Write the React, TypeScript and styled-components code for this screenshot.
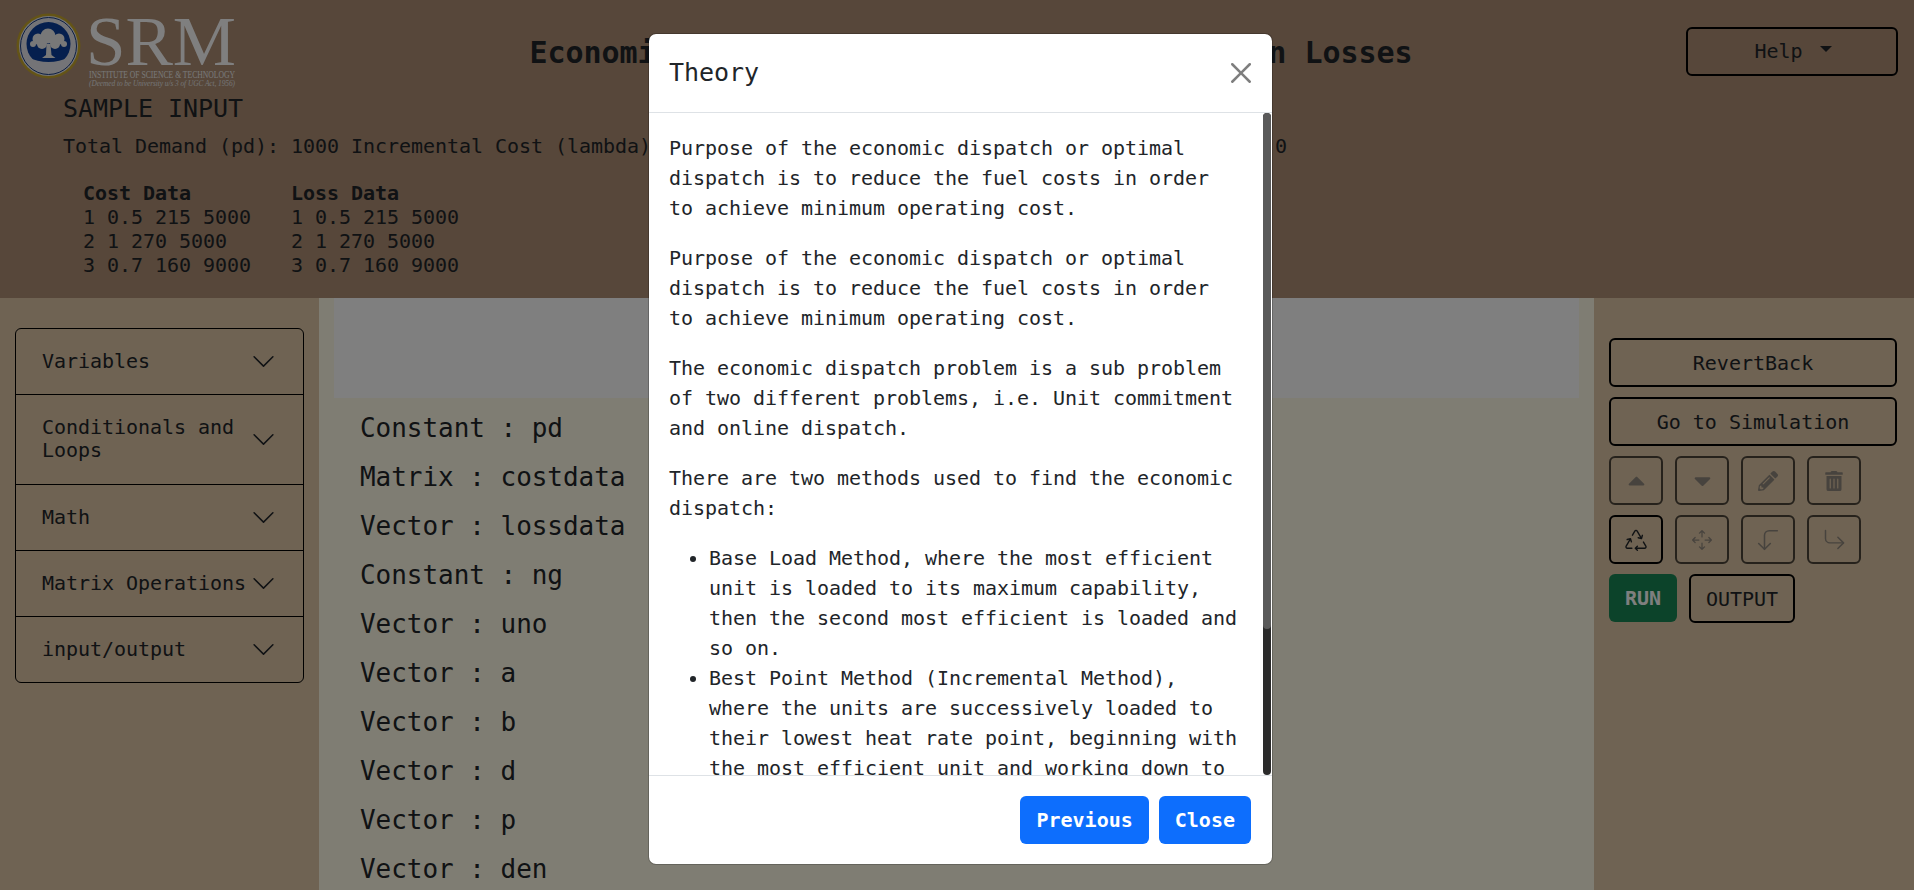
import React from "react";
import styled, { createGlobalStyle } from "styled-components";
import { FaCaretUp, FaCaretDown, FaPencilAlt, FaTrashAlt } from "react-icons/fa";
import { BsChevronDown, BsRecycle, BsArrowsMove } from "react-icons/bs";
import { CornerLeftDown, CornerDownRight } from "lucide-react";

const Global = createGlobalStyle`
  * { box-sizing: border-box; }
  html, body { margin: 0; height: 100%; overflow: hidden; }
  body {
    font-family: "DejaVu Sans Mono", "Liberation Mono", monospace;
    font-size: 20px;
    letter-spacing: -0.002em;
    line-height: 1.5;
    color: #212529;
    background: #fff;
  }
`;

const Page = styled.div`
  position: relative;
  height: 890px;
  display: flex;
  flex-direction: column;
  overflow: hidden;
`;

const Header = styled.header`
  height: 298px;
  flex: none;
  background: #ae8e74;
`;

const TopRow = styled.div`
  display: grid;
  grid-template-columns: 260px 1fr 228px;
  align-items: start;
  height: 88px;
`;

const LogoSvg = styled.svg`
  display: block;
  width: 260px;
  height: 88px;
`;

const Title = styled.h1`
  margin: 35px 0 0;
  font-size: 30px;
  font-weight: 700;
  line-height: 36px;
  text-align: center;
  white-space: nowrap;
  padding-right: 4px;
`;

const HelpButton = styled.button`
  width: 212px;
  height: 49px;
  margin-top: 27px;
  display: flex;
  align-items: center;
  justify-content: center;
  gap: 17px;
  padding: 0 0 2px 2px;
  background: transparent;
  border: 2px solid #000;
  border-radius: 6px;
  font: inherit;
  color: #212529;
`;

const Caret = styled.span`
  width: 0;
  height: 0;
  border-left: 6px solid transparent;
  border-right: 6px solid transparent;
  border-top: 6px solid #212529;
  margin-bottom: 3px;
`;

const Sample = styled.section`
  padding: 0 0 0 63px;
`;

const SampleTitle = styled.h5`
  margin: 6px 0 0;
  font-size: 25px;
  font-weight: 400;
  line-height: 30px;
`;

const SampleLine = styled.p`
  margin: 7px 0 0;
  white-space: nowrap;
`;

const DataTables = styled.div`
  display: flex;
  gap: 40px;
  margin: 20px 0 0 20px;
`;

const DataColumn = styled.div`
  width: 168px;
  line-height: 24px;
  white-space: pre;
`;

const DataHead = styled.div`
  font-weight: 700;
`;

const Main = styled.main`
  flex: 1;
  display: grid;
  grid-template-columns: 319px 1fr 320px;
  min-height: 0;
`;

const LeftPanel = styled.aside`
  background: #dec6a6;
  padding: 30px 15px 0 15px;
`;

const Accordion = styled.div`
  border: 1px solid #000;
  border-radius: 6px;
  overflow: hidden;
`;

const AccordionItem = styled.div`
  display: flex;
  align-items: center;
  justify-content: space-between;
  padding: 21px 27px 21px 26px;
  line-height: 23.2px;
  & + & {
    border-top: 1px solid #000;
  }
`;

const AccordionLabel = styled.span`
  flex: 1;
  min-width: 0;
`;

const Chevron = styled(BsChevronDown)`
  flex: none;
  width: 25px;
  height: 25px;
  margin: -4px 0;
`;

const Center = styled.div`
  background: #fffae6;
  padding: 0 15px;
  overflow: hidden;
`;

const Canvas = styled.div`
  height: 100px;
  background: #fff;
`;

const VarList = styled.ul`
  list-style: none;
  margin: 6px 0 0;
  padding: 0 0 0 26px;
`;

const VarRow = styled.li`
  height: 49px;
  font-size: 26px;
  line-height: 49px;
`;

const RightPanel = styled.aside`
  background: #dec6a6;
  padding: 40px 17px 0 15px;
  display: flex;
  flex-direction: column;
  gap: 10px;
`;

const OutlineButton = styled.button`
  height: 49px;
  padding: 0 15px;
  background: transparent;
  border: 2px solid #000;
  border-radius: 6px;
  font: inherit;
  color: #212529;
`;

const ToolGrid = styled.div`
  display: grid;
  grid-template-columns: repeat(4, 54px);
  gap: 10px 12px;
`;

const IconButton = styled.button<{ $disabled?: boolean }>`
  height: 49px;
  padding: 0;
  display: flex;
  align-items: center;
  justify-content: center;
  background: transparent;
  border: 2px solid #000;
  border-radius: 6px;
  color: ${(p) => (p.$disabled ? "#666666" : "#212529")};
  opacity: ${(p) => (p.$disabled ? 0.65 : 1)};
`;

const RunRow = styled.div`
  display: flex;
  gap: 12px;
`;

const RunButton = styled.button`
  width: 68px;
  height: 48px;
  padding: 0;
  background: #198754;
  border: 0;
  border-radius: 6px;
  font: inherit;
  font-weight: 600;
  color: #fff;
`;

const OutputButton = styled(OutlineButton)`
  width: 106px;
  padding: 0;
`;

const Backdrop = styled.div`
  position: absolute;
  inset: 0;
  background: rgba(0, 0, 0, 0.5);
`;

const Modal = styled.div`
  position: absolute;
  left: 648px;
  top: 33px;
  width: 625px;
  height: 832px;
  display: flex;
  flex-direction: column;
  background: #fff;
  background-clip: padding-box;
  border: 1px solid rgba(0, 0, 0, 0.2);
  border-radius: 8px;
  overflow: hidden;
`;

const ModalHead = styled.div`
  height: 79px;
  flex: none;
  display: flex;
  align-items: center;
  justify-content: space-between;
  padding: 0 21px 0 20px;
  border-bottom: 1px solid #dee2e6;
`;

const ModalTitle = styled.h5`
  margin: 0;
  font-size: 25px;
  font-weight: 400;
  line-height: 30px;
`;

const CloseX = styled.button`
  padding: 0;
  display: flex;
  background: none;
  border: 0;
  color: #000;
  opacity: 0.5;
`;

const ScrollArea = styled.div`
  position: relative;
  flex: 1;
  min-height: 0;
`;

const ModalBody = styled.div`
  height: 100%;
  overflow: hidden;
  padding: 20px 29px 20px 20px;
`;

const ScrollTrack = styled.div`
  position: absolute;
  top: 0;
  right: 1px;
  bottom: 0;
  width: 8px;
  background: #2b2b2b;
  border-radius: 4px;
`;

const ScrollThumb = styled.div`
  height: 516px;
  background: #5a5a5a;
  border-radius: 4px;
`;

const Para = styled.p`
  margin: 0 0 20px;
`;

const Bullets = styled.ul`
  margin: 0 0 20px;
  padding-left: 40px;
`;

const ModalFoot = styled.div`
  height: 89px;
  flex: none;
  display: flex;
  justify-content: flex-end;
  align-items: center;
  gap: 10px;
  padding: 0 21px 0 0;
  border-top: 1px solid #dee2e6;
`;

const PrimaryButton = styled.button`
  height: 48px;
  padding: 0 16px;
  background: #0d6efd;
  border: 0;
  border-radius: 6px;
  font: inherit;
  font-weight: 600;
  color: #fff;
`;

const Logo = () => (
  <LogoSvg viewBox="0 0 260 88" role="img" aria-label="SRM logo">
    <ellipse cx="48.5" cy="46" rx="32" ry="32.5" fill="#c9a92c" />
    <ellipse cx="48.5" cy="46" rx="29.5" ry="30" fill="#e8e8ee" />
    <ellipse cx="48.5" cy="46" rx="28" ry="28.5" fill="none" stroke="#1b3f86" strokeWidth="1" />
    <ellipse cx="48.5" cy="44" rx="22" ry="22" fill="#0a3f9c" />
    <path d="M27 57 A24 24 0 0 0 70 57 Q48.5 67 27 57Z" fill="#e8e8ee" />
    <g fill="#f0f0f0">
      <circle cx="48" cy="36" r="7.5" />
      <circle cx="38" cy="39" r="5.5" />
      <circle cx="59" cy="39" r="5.5" />
      <circle cx="42" cy="44" r="5" />
      <circle cx="55" cy="44" r="5" />
      <circle cx="33" cy="44" r="3" />
      <circle cx="64" cy="44" r="3" />
      <path d="M46.5 44h4l1 11 4 3H42l4-3z" />
    </g>
    <text x="86" y="65" fontFamily="'Liberation Serif', serif" fontSize="70" fill="#ffffff" textLength="150" lengthAdjust="spacingAndGlyphs">SRM</text>
    <text x="89" y="78" fontFamily="'Liberation Serif', serif" fontSize="9.5" fill="#f0f0f0" textLength="146" lengthAdjust="spacingAndGlyphs">INSTITUTE OF SCIENCE &amp; TECHNOLOGY</text>
    <text x="89" y="86" fontFamily="'Liberation Serif', serif" fontSize="7.5" fontStyle="italic" fill="#e8e8e8" textLength="146" lengthAdjust="spacingAndGlyphs">(Deemed to be University u/s 3 of UGC Act, 1956)</text>
  </LogoSvg>
);

const CloseIcon = () => (
  <svg width="20" height="20" viewBox="0 0 16 16" fill="currentColor" aria-hidden="true">
    <path d="M.293.293a1 1 0 011.414 0L8 6.586 14.293.293a1 1 0 111.414 1.414L9.414 8l6.293 6.293a1 1 0 01-1.414 1.414L8 9.414l-6.293 6.293a1 1 0 01-1.414-1.414L6.586 8 .293 1.707a1 1 0 010-1.414z" />
  </svg>
);

const dataRows = ["1 0.5 215 5000", "2 1 270 5000", "3 0.7 160 9000"];
const accordion = ["Variables", "Conditionals and Loops", "Math", "Matrix Operations", "input/output"];
const vars = [
  "Constant : pd", "Matrix : costdata", "Vector : lossdata", "Constant : ng", "Vector : uno",
  "Vector : a", "Vector : b", "Vector : d", "Vector : p", "Vector : den",
];

const DataTable = ({ title }: { title: string }) => (
  <DataColumn>
    <DataHead>{title}</DataHead>
    {dataRows.map((r) => (
      <div key={r}>{r}</div>
    ))}
  </DataColumn>
);

const purpose =
  "Purpose of the economic dispatch or optimal dispatch is to reduce the fuel costs in order to achieve minimum operating cost.";

export default function App() {
  return (
    <Page>
      <Global />
      <Header>
        <TopRow>
          <Logo />
          <Title>Economic Dispatch System with Transmission Losses</Title>
          <HelpButton>
            Help <Caret />
          </HelpButton>
        </TopRow>
        <Sample>
          <SampleTitle>SAMPLE INPUT</SampleTitle>
          <SampleLine>
            Total Demand (pd): 1000 Incremental Cost (lambda): 8 Number of Generators (ng): 3 Initial Loss (pl): 0
          </SampleLine>
          <DataTables>
            <DataTable title="Cost Data" />
            <DataTable title="Loss Data" />
          </DataTables>
        </Sample>
      </Header>
      <Main>
        <LeftPanel>
          <Accordion>
            {accordion.map((a) => (
              <AccordionItem key={a}>
                <AccordionLabel>{a}</AccordionLabel>
                <Chevron />
              </AccordionItem>
            ))}
          </Accordion>
        </LeftPanel>
        <Center>
          <Canvas />
          <VarList>
            {vars.map((v) => (
              <VarRow key={v}>{v}</VarRow>
            ))}
          </VarList>
        </Center>
        <RightPanel>
          <OutlineButton>RevertBack</OutlineButton>
          <OutlineButton>Go to Simulation</OutlineButton>
          <ToolGrid>
            <IconButton $disabled><FaCaretUp size={27} /></IconButton>
            <IconButton $disabled><FaCaretDown size={27} /></IconButton>
            <IconButton $disabled><FaPencilAlt size={20} /></IconButton>
            <IconButton $disabled><FaTrashAlt size={20} /></IconButton>
            <IconButton><BsRecycle size={22} /></IconButton>
            <IconButton $disabled><BsArrowsMove size={20} /></IconButton>
            <IconButton $disabled><CornerLeftDown size={28} strokeWidth={1.3} /></IconButton>
            <IconButton $disabled><CornerDownRight size={27} strokeWidth={1.3} /></IconButton>
          </ToolGrid>
          <RunRow>
            <RunButton>RUN</RunButton>
            <OutputButton>OUTPUT</OutputButton>
          </RunRow>
        </RightPanel>
      </Main>
      <Backdrop />
      <Modal>
        <ModalHead>
          <ModalTitle>Theory</ModalTitle>
          <CloseX aria-label="Close"><CloseIcon /></CloseX>
        </ModalHead>
        <ScrollArea>
          <ModalBody>
            <Para>{purpose}</Para>
            <Para>{purpose}</Para>
            <Para>
              The economic dispatch problem is a sub problem of two different problems, i.e. Unit commitment and online dispatch.
            </Para>
            <Para>There are two methods used to find the economic dispatch:</Para>
            <Bullets>
              <li>
                Base Load Method, where the most efficient unit is loaded to its maximum capability, then the second most efficient is loaded and so on.
              </li>
              <li>
                Best Point Method (Incremental Method), where the units are successively loaded to their lowest heat rate point, beginning with the most efficient unit and working down to the least efficient units.
              </li>
            </Bullets>
          </ModalBody>
          <ScrollTrack>
            <ScrollThumb />
          </ScrollTrack>
        </ScrollArea>
        <ModalFoot>
          <PrimaryButton>Previous</PrimaryButton>
          <PrimaryButton>Close</PrimaryButton>
        </ModalFoot>
      </Modal>
    </Page>
  );
}
